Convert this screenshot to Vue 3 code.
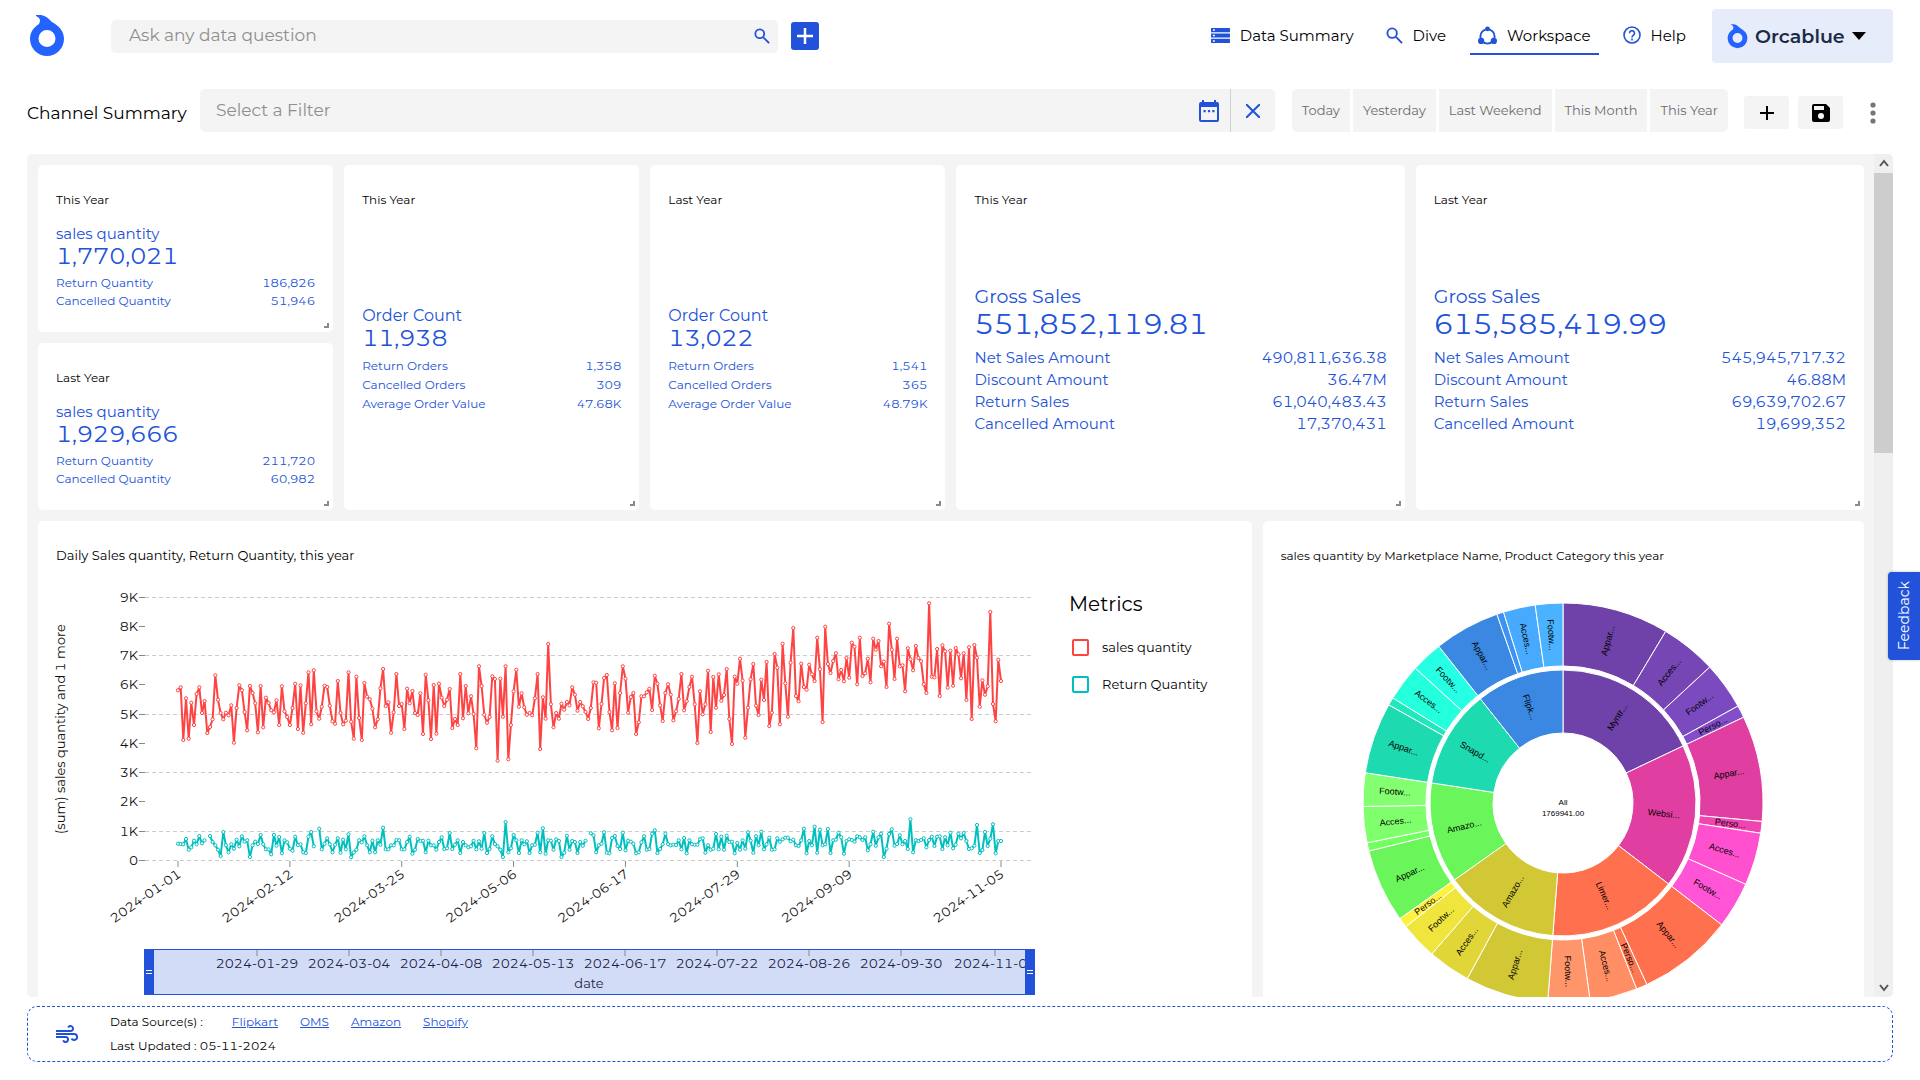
<script setup>
const navItems = [
  { id: 'summary', label: 'Data Summary' },
  { id: 'dive', label: 'Dive' },
  { id: 'workspace', label: 'Workspace', active: true },
  { id: 'help', label: 'Help' },
]

const ranges = ['Today', 'Yesterday', 'Last Weekend', 'This Month', 'This Year']

const kpis = [
  { title: 'This Year', size: 'small', label: 'sales quantity', value: '1,770,021', rows: [['Return Quantity', '186,826'], ['Cancelled Quantity', '51,946']] },
  { title: 'This Year', size: 'medium', label: 'Order Count', value: '11,938', rows: [['Return Orders', '1,358'], ['Cancelled Orders', '309'], ['Average Order Value', '47.68K']] },
  { title: 'Last Year', size: 'medium', label: 'Order Count', value: '13,022', rows: [['Return Orders', '1,541'], ['Cancelled Orders', '365'], ['Average Order Value', '48.79K']] },
  { title: 'This Year', size: 'large', label: 'Gross Sales', value: '551,852,119.81', rows: [['Net Sales Amount', '490,811,636.38'], ['Discount Amount', '36.47M'], ['Return Sales', '61,040,483.43'], ['Cancelled Amount', '17,370,431']] },
  { title: 'Last Year', size: 'large', label: 'Gross Sales', value: '615,585,419.99', rows: [['Net Sales Amount', '545,945,717.32'], ['Discount Amount', '46.88M'], ['Return Sales', '69,639,702.67'], ['Cancelled Amount', '19,699,352']] },
  { title: 'Last Year', size: 'small', label: 'sales quantity', value: '1,929,666', rows: [['Return Quantity', '211,720'], ['Cancelled Quantity', '60,982']] },
]

const sources = ['Flipkart', 'OMS', 'Amazon', 'Shopify']

/* Daily samples, one per day from 1 January; 1022 is the zero line and 87.8 units make one thousand. */
const ZERO = 1022
const sales = [
  510, 501, 659, 534, 655, 547, 614, 521, 501, 578, 542, 638, 620, 597, 465, 538, 578, 597, 577, 585,
  555, 667, 563, 495, 510, 575, 630, 497, 518, 549, 636, 497, 621, 532, 548, 570, 576, 540, 614, 498,
  573, 590, 614, 563, 490, 626, 495, 637, 549, 456, 612, 450, 573, 595, 559, 496, 500, 556, 603, 610,
  482, 578, 612, 601, 456, 604, 655, 469, 593, 659, 488, 529, 537, 565, 621, 597, 504, 446, 557, 546,
  637, 576, 461, 557, 551, 626, 505, 549, 512, 578, 584, 519, 641, 463, 540, 656, 494, 640, 490, 532,
  557, 538, 506, 623, 596, 614, 461, 594, 497, 579, 528, 581, 684, 438, 497, 583, 607, 590, 468, 476,
  721, 475, 589, 438, 717, 614, 513, 448, 559, 519, 561, 583, 578, 585, 534, 461, 686, 531, 595, 371,
  552, 621, 578, 595, 550, 568, 545, 555, 501, 523, 571, 545, 558, 575, 596, 563, 486, 487, 624, 551,
  473, 464, 575, 630, 489, 623, 518, 438, 475, 577, 530, 518, 641, 606, 528, 528, 516, 505, 569, 466,
  490, 555, 602, 518, 492, 523, 600, 573, 536, 461, 570, 543, 500, 469, 552, 668, 513, 582, 552, 451,
  635, 470, 562, 462, 541, 524, 446, 596, 671, 469, 490, 415, 481, 652, 562, 477, 431, 556, 584, 478,
  539, 425, 617, 577, 401, 442, 612, 370, 489, 589, 427, 323, 527, 543, 430, 500, 508, 433, 462, 482,
  352, 447, 605, 319, 431, 458, 422, 399, 477, 449, 483, 413, 472, 367, 379, 492, 352, 467, 459, 415,
  486, 355, 388, 362, 438, 424, 500, 310, 388, 476, 355, 438, 435, 513, 384, 417, 450, 377, 413, 423,
  492, 518, 249, 469, 471, 386, 527, 375, 393, 502, 391, 496, 383, 402, 474, 399, 539, 381, 596, 374,
  412, 559, 480, 523, 498, 275, 551, 603, 418, 482,
]
const returns = [
  970, 971, 972, 956, 988, 981, 961, 972, 947, 969, 960, null, 947, 965, 975, 988, 1007, 935, 975, 996,
  972, 985, 958, 978, 948, 964, 960, 1010, 975, 964, 971, 944, 972, 987, 987, 1002, 944, 976, 950, 999,
  960, 966, 985, 991, 949, 974, 972, 996, 998, 949, 935, 978, null, 925, 987, 970, 954, 972, 996, 973,
  954, 997, 958, 987, 942, 1011, 996, 988, 960, 966, 948, 975, 996, 961, 996, 960, 973, 922, 987, 987,
  975, 975, 959, 960, 987, 987, 965, 949, 1000, 988, 956, 962, 961, 996, 961, 975, 975, 988, 965, 951,
  986, 984, 938, 986, 973, 960, 998, 965, 975, 981, 978, 961, 987, 963, 985, 938, 998, 986, 948, 971,
  978, 988, 1010, 905, 996, 984, 944, 960, 998, 960, 972, 963, 998, 975, 973, 937, 996, 924, 1000, 960,
  961, 988, 957, 962, 1010, 997, 946, 988, 962, 965, 998, 965, 976, 961, null, 939, 945, 996, 975, 970,
  936, 997, 999, 953, 947, 977, 986, 937, 990, 961, 964, 970, 999, 996, 966, 948, 988, 986, 940, 930,
  998, 986, 972, 940, 972, 975, 973, 974, 960, 987, 953, 999, 960, 972, 973, 973, 957, 954, 997, 975,
  988, 985, 941, 987, 949, 988, 946, 965, 964, 999, 968, 988, 960, 985, 936, 961, 997, 948, 975, 934,
  987, 972, 952, 988, 987, 954, 964, 957, 952, 952, 963, 958, 975, 977, 960, 925, 999, 962, 975, 919,
  997, 928, 975, 972, 926, 998, 960, 958, 937, 951, 1000, 962, 957, 959, 964, 948, 951, 959, 951, 990,
  972, 934, 976, 951, 940, 1010, 985, 941, 927, 976, 971, 945, 972, 962, 986, 897, 996, 960, 962, 959,
  954, 981, 959, 949, 977, 949, 948, 986, 951, 975, 937, 984, 973, 940, 954, 938, 962, 986, 984, 976,
  914, 998, 989, 935, 977, 955, 912, 999, 962, 962,
]

const plot = { left: 89, right: 978, zero: 281, first: 122, last: 945, thousand: 29.26 }
const dayX = (i) => plot.first + (i * (plot.last - plot.first)) / (sales.length - 1)
const place = (list) =>
  list.map((v, i) => (v === null ? null : { x: +dayX(i).toFixed(1), y: +(plot.zero - (ZERO - v) / 3).toFixed(1) }))
const toPath = (points) => {
  let pen = 'M'
  return points
    .map((p) => {
      if (!p) {
        pen = 'M'
        return ''
      }
      const step = `${pen}${p.x} ${p.y}`
      pen = 'L'
      return step
    })
    .join('')
}
const series = [
  { id: 'sales', label: 'sales quantity', color: '#ff4343', points: place(sales) },
  { id: 'returns', label: 'Return Quantity', color: '#00bfbf', points: place(returns) },
]
const yTicks = [0, 1, 2, 3, 4, 5, 6, 7, 8, 9].map((n) => ({
  label: n ? `${n}K` : '0',
  y: Math.round(plot.zero - n * plot.thousand) - 0.5,
  grid: n === 0 || n % 2 === 1,
}))
const xTicks = [
  ['2024-01-01', 0], ['2024-02-12', 42], ['2024-03-25', 84], ['2024-05-06', 126],
  ['2024-06-17', 168], ['2024-07-29', 210], ['2024-09-09', 252], ['2024-11-05', 309],
].map(([label, day]) => ({ label, x: dayX(day) }))
const brushTicks = [
  ['2024-01-29', 201], ['2024-03-04', 293], ['2024-04-08', 385], ['2024-05-13', 477], ['2024-06-17', 569],
  ['2024-07-22', 661], ['2024-08-26', 753], ['2024-09-30', 845], ['2024-11-04', 939],
].map(([label, x]) => ({ label, x }))

/* Sunburst: [name, colour, end angle, children of the same form]; angles run clockwise from the top. */
const tree = [
  ['Myntr...', '#6e42a9', 64.6, [['Appar...', '#6e42a9', 30.9], ['Acces...', '#7546b4', 47.2], ['Footw...', '#7c4abf', 61], ['Perso...', '#834eca', 64.6]]],
  ['Websi...', '#e03fa1', 127.5, [['Appar...', '#e03fa1', 95.3], ['Perso...', '#f045b0', 98.7], ['Acces...', '#ff51cf', 114], ['Footw...', '#ff54d6', 127.5]]],
  ['Limer...', '#ff704f', 184.4, [['Appar...', '#ff704f', 155.2], ['Perso...', '#ff7854', 158.4], ['Acces...', '#ff8e64', 172.2], ['Footw...', '#ff956a', 184.4]]],
  ['Amazo...', '#d2c835', 234.7, [['Appar...', '#d2c835', 208.6], ['Acces...', '#e1d638', 221], ['Footw...', '#f0e53c', 231.8], ['Perso...', '#fff23f', 234.7]]],
  ['Amazo...', '#6af65a', 278.7, [['Appar...', '#6af65a', 256.1], ['', '#72ff61', 258.5], ['Acces...', '#80ff6d', 269], ['Footw...', '#85ff72', 278.7]]],
  ['Snapd...', '#1ddab0', 321.6, [['Appar...', '#1ddab0', 299.4], ['', '#1fe9bc', 301.7], ['Acces...', '#24ffdc', 312.4], ['Footw...', '#26ffe4', 321.6]]],
  ['Flipk...', '#3a88e2', 360, [['Appar...', '#3a88e2', 340.7], ['', '#3e92f2', 342.7], ['Acces...', '#48aaff', 352], ['Footw...', '#4bb2ff', 360]]],
]
const polar = (r, deg) => {
  const a = (deg * Math.PI) / 180
  return [(r * Math.sin(a)).toFixed(2), (-r * Math.cos(a)).toFixed(2)]
}
const slice = (label, color, from, to, inner, outer) => {
  const middle = (from + to) / 2
  const [x, y] = polar((inner + outer) / 2, middle)
  return {
    label,
    color,
    d: `M${polar(inner, from)}L${polar(outer, from)}A${outer} ${outer} 0 0 1 ${polar(outer, to)}L${polar(inner, to)}A${inner} ${inner} 0 0 0 ${polar(inner, from)}Z`,
    turn: `translate(${x} ${y}) rotate(${middle <= 180 ? middle - 90 : middle - 270})`,
  }
}
const slices = []
let innerFrom = 0
let outerFrom = 0
for (const [name, color, end, children] of tree) {
  slices.push(slice(name, color, innerFrom, end, 70, 133))
  innerFrom = end
  for (const [child, tint, childEnd] of children) {
    slices.push(slice(child, tint, outerFrom, childEnd, 137, 200))
    outerFrom = childEnd
  }
}
</script>

<template>
  <div class="shell">
    <header class="topbar">
      <a href="#" class="logo" aria-label="Home">
        <svg width="36" height="42" viewBox="0 0 36 42" fill="#2563ff"><path fill-rule="evenodd" d="M8 0c7-1 11 3 15 7 7 4 12 9 12 17a17 17 0 0 1-34 0c0-7 4-12 9-15 2-4 1-6-3-8 0-1 0-1 1-1ZM18 15a8.500 8.500 0 1 0 0 17 8.500 8.500 0 0 0 0-17Z" /></svg>
      </a>
      <form class="ask" role="search" @submit.prevent>
        <input type="text" placeholder="Ask any data question" aria-label="Ask any data question" />
        <button type="submit" aria-label="Search">
          <svg width="16" height="16" viewBox="0 0 18 18" fill="none" stroke="#2152d9" stroke-width="2"><circle cx="6.500" cy="6.500" r="5" /><path d="m10.500 10.500 6.500 6.500" /></svg>
        </button>
      </form>
      <button class="add" type="button" aria-label="Add">
        <svg width="16" height="16" viewBox="0 0 16 16" stroke="#fff" stroke-width="2.500"><path d="M8 0v16M0 8h16" /></svg>
      </button>
      <nav class="nav">
        <a v-for="item in navItems" :key="item.id" href="#" :class="{ active: item.active }">
          <svg v-if="item.id === 'summary'" width="19" height="17" viewBox="0 0 20 18">
            <path fill="#2152d9" d="M0 1h20v4.500H0zM0 6.800h20v4.400H0zM0 12.500h20V17H0z" />
            <path fill="#fff" d="M2 2.500h2v1.500H2zM2 8.300h2v1.500H2zM2 14h2v1.500H2z" />
          </svg>
          <svg v-else-if="item.id === 'dive'" width="17" height="17" viewBox="0 0 18 18" fill="none" stroke="#2152d9" stroke-width="2"><circle cx="6.500" cy="6.500" r="5" /><path d="m10.500 10.500 6.500 6.500" /></svg>
          <svg v-else-if="item.id === 'workspace'" width="19" height="19" viewBox="0 0 20 20" fill="#2152d9">
            <circle cx="10" cy="11" r="7.500" fill="none" stroke="#2152d9" stroke-width="2" />
            <circle cx="10" cy="3" r="2.500" /><circle cx="3.300" cy="15.700" r="3.300" /><circle cx="16.700" cy="15.700" r="3.300" />
          </svg>
          <svg v-else width="18" height="18" viewBox="0 0 18 18" fill="none" stroke="#2152d9" stroke-width="1.600">
            <circle cx="9" cy="9" r="8" /><path d="M6.500 7.200a2.500 2.500 0 1 1 3.800 2.100C9.400 9.900 9 10.300 9 11.400M9 12.600v1.800" />
          </svg>
          <span>{{ item.label }}</span>
        </a>
      </nav>
      <button class="account" type="button">
        <svg width="21" height="25" viewBox="0 0 36 42" fill="#2563ff"><path fill-rule="evenodd" d="M8 0c7-1 11 3 15 7 7 4 12 9 12 17a17 17 0 0 1-34 0c0-7 4-12 9-15 2-4 1-6-3-8 0-1 0-1 1-1ZM18 15a8.500 8.500 0 1 0 0 17 8.500 8.500 0 0 0 0-17Z" /></svg>
        <span>Orcablue</span>
        <svg width="14" height="8" viewBox="0 0 14 8"><path d="M0 0h14L7 8z" /></svg>
      </button>
    </header>

    <section class="toolbar">
      <h1>Channel Summary</h1>
      <div class="filter">
        <input type="text" placeholder="Select a Filter" aria-label="Select a Filter" />
        <button type="button" class="calendar" aria-label="Pick dates">
          <svg width="20" height="22" viewBox="0 0 20 22" fill="#2152d9"><path fill-rule="evenodd" d="M3 0h2v2h10V0h2v2h1a2 2 0 0 1 2 2v16a2 2 0 0 1-2 2H2a2 2 0 0 1-2-2V4a2 2 0 0 1 2-2h1ZM2 7v13h16V7Z" /><path d="M4.500 10h2.200v2.200H4.500zM8.900 10h2.200v2.200H8.900zM13.300 10h2.200v2.200h-2.200z" /></svg>
        </button>
        <button type="button" class="clear" aria-label="Clear filter">
          <svg width="14" height="14" viewBox="0 0 14 14" stroke="#2152d9" stroke-width="2"><path d="m0 0 14 14M14 0 0 14" /></svg>
        </button>
      </div>
      <div class="ranges">
        <button v-for="range in ranges" :key="range" type="button">{{ range }}</button>
      </div>
      <div class="actions">
        <button type="button" aria-label="Add widget">
          <svg width="14" height="14" viewBox="0 0 14 14" stroke="#000" stroke-width="2"><path d="M7 0v14M0 7h14" /></svg>
        </button>
        <button type="button" aria-label="Save">
          <svg width="18" height="18" viewBox="0 0 18 18"><path fill-rule="evenodd" d="M2 0h12l4 4v12a2 2 0 0 1-2 2H2a2 2 0 0 1-2-2V2a2 2 0 0 1 2-2Zm0 2v4h10V2Zm7 7a3 3 0 1 0 0 6 3 3 0 0 0 0-6Z" /></svg>
        </button>
        <button type="button" class="more" aria-label="More">
          <svg width="6" height="22" viewBox="0 0 6 22" fill="#757575"><circle cx="3" cy="3" r="2.600" /><circle cx="3" cy="11" r="2.600" /><circle cx="3" cy="19" r="2.600" /></svg>
        </button>
      </div>
    </section>

    <main class="board">
      <div class="grid">
        <article v-for="(kpi, n) in kpis" :key="n" class="card kpi" :class="kpi.size">
          <h2>{{ kpi.title }}</h2>
          <div class="figures">
            <p class="label">{{ kpi.label }}</p>
            <p class="value">{{ kpi.value }}</p>
            <dl>
              <div v-for="[name, amount] in kpi.rows" :key="name"><dt>{{ name }}</dt><dd>{{ amount }}</dd></div>
            </dl>
          </div>
          <i class="grip"></i>
        </article>

        <article class="card trend">
          <h2>Daily Sales quantity, Return Quantity, this year</h2>
          <div class="trend-body">
            <svg class="chart" width="990" height="420" viewBox="0 0 990 420" role="img" aria-label="Daily sales and returns">
              <text class="axis" text-anchor="middle" transform="translate(9 149) rotate(-90)">(sum) sales quantity and 1 more</text>
              <g v-for="tick in yTicks" :key="tick.label">
                <path v-if="tick.grid" class="gridline" :d="`M${plot.left} ${tick.y}H${plot.right}`" />
                <path class="tick" :d="`M83 ${tick.y}h6`" />
                <text class="axis" x="82" :y="tick.y + 4.5" text-anchor="end">{{ tick.label }}</text>
              </g>
              <g v-for="tick in xTicks" :key="tick.label">
                <path class="tick" :d="`M${tick.x} ${plot.zero}v6`" />
                <text class="axis" text-anchor="end" :transform="`translate(${tick.x + 4} 296) rotate(-35)`">{{ tick.label }}</text>
              </g>
              <g v-for="line in series" :key="line.id">
                <path :d="toPath(line.points)" fill="none" :stroke="line.color" stroke-width="2" stroke-linejoin="round" />
                <template v-for="(p, i) in line.points" :key="i">
                  <circle v-if="p" :cx="p.x" :cy="p.y" r="1.600" fill="#fff" :stroke="line.color" stroke-width="1" />
                </template>
              </g>
              <rect x="89" y="369.500" width="889" height="45" fill="#d3dcf7" stroke="#2152d9" />
              <g v-for="tick in brushTicks" :key="tick.label">
                <path class="tick" :d="`M${tick.x} 370v6`" />
                <text class="axis brush" :x="tick.x" y="388" text-anchor="middle">{{ tick.label }}</text>
              </g>
              <text class="axis brush" x="533" y="408" text-anchor="middle">date</text>
              <rect x="979" y="365" width="11" height="50" fill="#fff" />
              <g v-for="x in [88, 969]" :key="x">
                <rect :x="x" y="369" width="10" height="46" fill="#2152d9" />
                <path :d="`M${x + 2} 390.500h6M${x + 2} 393.500h6`" stroke="#fff" />
              </g>
            </svg>
            <div class="legend">
              <h3>Metrics</h3>
              <label v-for="line in series" :key="line.id" :class="line.id"><input type="checkbox" />{{ line.label }}</label>
            </div>
          </div>
        </article>

        <article class="card burst">
          <h2>sales quantity by Marketplace Name, Product Category this year</h2>
          <svg width="404" height="404" viewBox="-202 -202 404 404" role="img" aria-label="Sales by marketplace and category">
            <path v-for="(s, i) in slices" :key="i" :d="s.d" :fill="s.color" stroke="#fff" />
            <text v-for="(s, i) in slices" :key="'t' + i" :transform="s.turn" text-anchor="middle" dominant-baseline="central">{{ s.label }}</text>
            <text class="total" y="2" text-anchor="middle">All</text>
            <text class="total" y="13" text-anchor="middle">1769941.00</text>
          </svg>
        </article>
      </div>
      <div class="scroll">
        <svg width="10" height="19" viewBox="0 0 10 19"><path d="m1 12 4-5 4 5" /></svg>
        <div class="track"><div class="thumb"></div></div>
        <svg width="10" height="19" viewBox="0 0 10 19"><path d="m1 7 4 5 4-5" /></svg>
      </div>
    </main>

    <footer class="sources">
      <svg width="22" height="18" viewBox="0 0 22 18" fill="none" stroke="#2152d9" stroke-width="2"><path d="M0 6h14.500a2.500 2.500 0 1 0-2.300-3.500M0 9h18a3 3 0 1 1-2.500 4.500M0 12h9.500a2.500 2.500 0 1 1-2.300 3.300" /></svg>
      <div>
        <p><span>Data Source(s) :</span><a v-for="s in sources" :key="s" href="#">{{ s }}</a></p>
        <p>Last Updated : 05-11-2024</p>
      </div>
    </footer>

    <button class="feedback" type="button">Feedback</button>
  </div>
</template>

<style>
body {
  margin: 0;
  background: #fff;
}
</style>

<style scoped>
.shell {
  box-sizing: border-box;
  height: 100vh;
  display: flex;
  flex-direction: column;
  padding: 0 27px 18px;
  overflow: hidden;
  color: #000;
  font-family: Montserrat, Inter, sans-serif;
  font-variant-numeric: tabular-nums;
}
.shell * {
  box-sizing: border-box;
}
h1, h2, h3, p, dl, dd {
  margin: 0;
  font-weight: 400;
}
svg {
  display: block;
  flex: none;
}
button, input {
  border: 0;
  padding: 0;
  background: none;
  font: inherit;
  color: inherit;
}
button {
  cursor: pointer;
  display: flex;
  align-items: center;
  justify-content: center;
}
input::placeholder {
  color: #8f8f8f;
  opacity: 1;
}
.topbar {
  display: flex;
  align-items: center;
  height: 72px;
}
.logo {
  width: 84px;
  padding-left: 2px;
}
.ask {
  flex: 0 1 667px;
  display: flex;
  height: 33px;
  padding: 0 8px 0 18px;
  border-radius: 5px;
  background: #f4f4f4;
  font-size: 17px;
}
.ask input, .filter input {
  flex: 1;
  min-width: 0;
  padding-bottom: 2px;
  outline: 0;
}
.add {
  width: 28px;
  height: 28px;
  margin-left: 13px;
  border-radius: 3px;
  background: #2152d9;
}
.nav {
  display: flex;
  gap: 16px;
  margin: 0 18px 0 auto;
}
.nav a {
  display: flex;
  align-items: center;
  gap: 10px;
  height: 38px;
  padding: 0 8px;
  border-bottom: 2px solid transparent;
  font-size: 15px;
  color: #000;
  text-decoration: none;
}
.nav .active {
  border-color: #2152d9;
}
.account {
  width: 181px;
  height: 54px;
  gap: 7px;
  padding-left: 15px;
  justify-content: flex-start;
  border-radius: 4px;
  background: #e6ecfa;
  font-size: 19px;
  font-weight: 600;
  color: #1c2b45;
}
.toolbar {
  display: flex;
  height: 43px;
  margin: 17px 0 22px;
}
h1 {
  min-width: 173px;
  font-size: 17px;
  line-height: 48px;
}
.filter {
  flex: 1;
  display: flex;
  padding-left: 16px;
  border-radius: 5px;
  background: #f4f4f4;
  font-size: 17px;
}
.calendar {
  width: 42px;
}
.clear {
  width: 45px;
  border-left: 1px solid #d0d0d0;
}
.ranges {
  display: flex;
  gap: 3px;
  margin: 0 16px 0 17px;
}
.ranges button {
  padding: 0 10px 2px;
  background: #f4f4f4;
  font-size: 13px;
  color: #6c6c6c;
}
.ranges button:first-child {
  border-radius: 5px 0 0 5px;
}
.ranges button:last-child {
  border-radius: 0 5px 5px 0;
}
.actions {
  display: flex;
  gap: 9px;
  align-items: center;
  padding-top: 4px;
}
.actions button {
  width: 45px;
  height: 33px;
  border-radius: 3px;
  background: #f4f4f4;
}
.actions .more {
  width: 41px;
  background: none;
}
.board {
  flex: 1;
  min-height: 0;
  display: flex;
  border-radius: 5px;
  background: #f4f4f4;
  overflow: hidden;
}
.grid {
  flex: 1;
  min-width: 0;
  display: grid;
  grid-template-columns: repeat(12, minmax(0, 1fr));
  grid-template-rows: 167px 167px 524px;
  gap: 11px;
  padding: 11px 10px 11px 11px;
  overflow: hidden;
}
.card {
  position: relative;
  display: flex;
  flex-direction: column;
  padding: 25px 18px 16px;
  border-radius: 5px;
  background: #fff;
}
.card h2 {
  font-size: 12px;
  line-height: 19px;
}
.kpi {
  color: #2152d9;
}
.kpi h2 {
  color: #000;
}
.small {
  grid-column: span 2;
}
.medium {
  grid-column: span 2;
  grid-row: span 2;
}
.large {
  grid-column: span 3;
  grid-row: span 2;
}
.figures {
  flex: 1;
  display: flex;
  flex-direction: column;
  justify-content: center;
  padding-top: 8px;
}
.label {
  font-size: 15px;
  line-height: 19px;
}
.value {
  font-size: 23px;
  line-height: 27px;
}
.kpi dl {
  padding-top: 4px;
}
.kpi dl div {
  display: flex;
  justify-content: space-between;
  font-size: 12px;
  line-height: 18px;
}
.medium .figures, .large .figures {
  padding-top: 16px;
}
.medium .label {
  font-size: 16px;
}
.medium dl div {
  line-height: 19px;
}
.large .label {
  font-size: 19px;
  line-height: 23px;
}
.large .value {
  font-size: 28px;
  line-height: 33px;
}
.large dl {
  padding-top: 6px;
}
.large dl div {
  font-size: 15px;
  line-height: 22px;
}
.grip {
  position: absolute;
  right: 4px;
  bottom: 4px;
  width: 5px;
  height: 5px;
  border: solid #8a8a8a;
  border-width: 0 2px 2px 0;
}
.trend {
  grid-column: span 8;
}
.trend h2 {
  font-size: 13px;
}
.trend-body {
  display: flex;
  gap: 23px;
  padding-top: 15px;
}
.chart {
  overflow: visible;
}
.axis {
  font-size: 13px;
  fill: #111;
}
.brush {
  fill: #1a2547;
}
.gridline {
  stroke: #ccc;
  stroke-dasharray: 4 3;
}
.tick {
  stroke: #888;
}
.legend h3 {
  padding: 10px 0 4px;
  font-size: 20px;
  line-height: 28px;
}
.legend label {
  display: flex;
  align-items: center;
  gap: 13px;
  margin-bottom: 15px;
  padding-left: 3px;
  font-size: 13px;
  line-height: 22px;
}
.legend h3 + label {
  margin-top: 14px;
}
.legend input {
  appearance: none;
  width: 17px;
  height: 17px;
  margin: 0;
  border: 2px solid #ff4343;
  border-radius: 2px;
}
.legend .returns input {
  border-color: #00bfbf;
}
.burst {
  grid-column: span 4;
}
.burst svg {
  align-self: center;
  margin-top: 36px;
}
.burst text {
  font: 9px "Liberation Sans", Arial, sans-serif;
}
.burst .total {
  font-size: 8px;
}
.scroll {
  width: 19px;
  display: flex;
  flex-direction: column;
  align-items: center;
  background: #efefef;
}
.scroll path {
  fill: none;
  stroke: #555;
  stroke-width: 2;
}
.track {
  flex: 1;
  width: 100%;
}
.thumb {
  height: 280px;
  background: #cdcdcd;
}
.sources {
  display: flex;
  align-items: center;
  gap: 32px;
  height: 56px;
  margin-top: 9px;
  padding-left: 28px;
  border: 1px dashed #2152d9;
  border-radius: 10px;
  font-size: 12px;
  line-height: 24px;
}
.sources p {
  display: flex;
  gap: 22px;
}
.sources span {
  margin-right: 7px;
}
.sources a {
  color: #2152d9;
}
.feedback {
  position: absolute;
  right: 0;
  top: 572px;
  width: 32px;
  height: 88px;
  border-radius: 0 4px 4px 0;
  background: #2152d9;
  box-shadow: 0 0 3px #0004;
  color: #fff;
  font-size: 14px;
  writing-mode: vertical-rl;
  transform: rotate(180deg);
}
</style>
